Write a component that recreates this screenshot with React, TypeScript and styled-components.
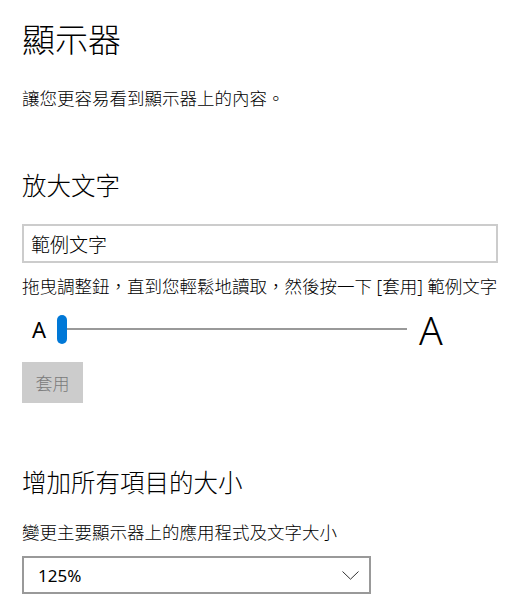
import React from 'react'
import styled, { createGlobalStyle } from 'styled-components'

const GlobalStyle = createGlobalStyle`
  body {
    margin: 0;
    background: #fff;
    font-family: "Noto Sans", "Noto Sans CJK TC", sans-serif;
    color: #000;
  }
`

const App: React.FC = () => {
  return (
    <Page>
      <GlobalStyle />
      <Title>顯示器</Title>
      <Body style={{ marginTop: 28 }}>讓您更容易看到顯示器上的內容。</Body>

      <Section style={{ marginTop: 59 }}>放大文字</Section>
      <SampleBox>範例文字</SampleBox>
      <Body style={{ marginTop: 11 }}>拖曳調整鈕，直到您輕鬆地讀取，然後按一下 [套用] 範例文字</Body>
      <SliderRow>
        <Letter size={22} weight={400}>A</Letter>
        <Slider>
          <Thumb />
          <Track />
        </Slider>
        <Letter size={39} weight={300}>A</Letter>
      </SliderRow>
      <ApplyButton disabled>套用</ApplyButton>

      <Section style={{ marginTop: 63 }}>增加所有項目的大小</Section>
      <Body style={{ marginTop: 22 }}>變更主要顯示器上的應用程式及文字大小</Body>
      <Dropdown>
        <span>125%</span>
        <svg width="17" height="9" viewBox="0 0 17 9">
          <path d="M0.5 0.5 L8.5 8.2 L16.5 0.5" fill="none" stroke="#333" strokeWidth="1" />
        </svg>
      </Dropdown>
    </Page>
  )
}

export default App

const Page = styled.div`
  display: flex;
  flex-direction: column;
  align-items: flex-start;
  padding: 18px 0 0 22px;
`
const Title = styled.div`
  font-family: "Noto Sans CJK TC", sans-serif;
  font-size: 33px;
  font-weight: 300;
  line-height: 40px;
`
const Body = styled.div`
  font-family: "Noto Sans", "Noto Sans CJK TC", sans-serif;
  font-size: 17.5px;
  font-weight: 300;
  line-height: 24px;
  white-space: nowrap;
`
const Section = styled.div`
  font-family: "Noto Sans CJK TC", sans-serif;
  font-size: 24.5px;
  font-weight: 300;
  line-height: 32px;
`
const SampleBox = styled.div`
  box-sizing: border-box;
  margin-top: 23px;
  width: 476px;
  height: 39px;
  border: 2px solid #cccccc;
  padding-left: 7px;
  display: flex;
  align-items: center;
  font-family: "Noto Sans CJK TC", sans-serif;
  font-size: 19px;
  font-weight: 300;
`
const SliderRow = styled.div`
  margin-top: 16px;
  height: 30px;
  display: flex;
  align-items: center;
  padding-left: 10px;
`
const Letter = styled.span<{ size: number; weight: number }>`
  font-family: "Noto Sans", sans-serif;
  font-size: ${p => p.size}px;
  font-weight: ${p => p.weight};
  line-height: 1;
`
const Slider = styled.div`
  width: 350px;
  margin: 0 12px 0 11px;
  display: flex;
  align-items: center;
`
const Thumb = styled.div`
  width: 10px;
  height: 29px;
  border-radius: 5px;
  background: #0078d7;
`
const Track = styled.div`
  flex: 1;
  height: 2px;
  background: #999;
`
const ApplyButton = styled.button`
  margin-top: 18px;
  width: 61px;
  height: 41px;
  border: none;
  background: #cccccc;
  color: #7a7a7a;
  font-family: "Noto Sans CJK TC", sans-serif;
  font-size: 17px;
  font-weight: 300;
  padding: 0;
`
const Dropdown = styled.div`
  box-sizing: border-box;
  margin-top: 12px;
  width: 349px;
  height: 38px;
  border: 2px solid #999;
  display: flex;
  align-items: center;
  justify-content: space-between;
  padding: 0 10px 0 14px;
  font-family: "Noto Sans", sans-serif;
  font-size: 17px;
`
